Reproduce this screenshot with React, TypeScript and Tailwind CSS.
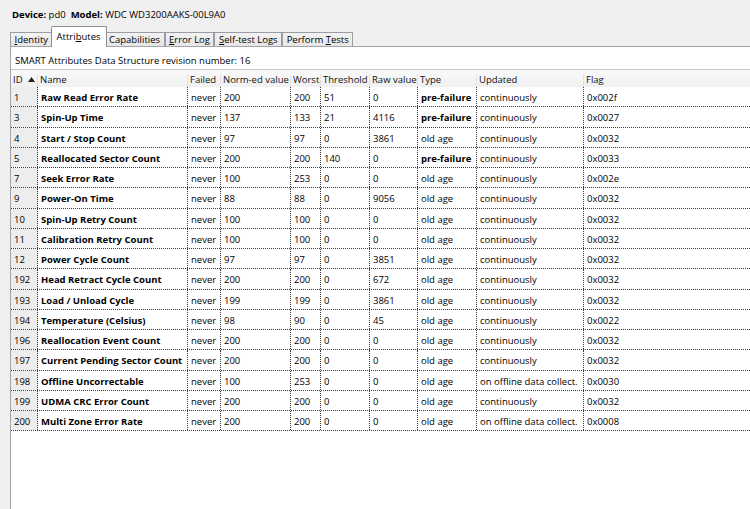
import React from "react";

type Row = {
  id: string;
  name: string;
  failed: string;
  norm: string;
  worst: string;
  thr: string;
  raw: string;
  type: string;
  updated: string;
  flag: string;
};

const rows: Row[] = [
  { id: "1", name: "Raw Read Error Rate", failed: "never", norm: "200", worst: "200", thr: "51", raw: "0", type: "pre-failure", updated: "continuously", flag: "0x002f" },
  { id: "3", name: "Spin-Up Time", failed: "never", norm: "137", worst: "133", thr: "21", raw: "4116", type: "pre-failure", updated: "continuously", flag: "0x0027" },
  { id: "4", name: "Start / Stop Count", failed: "never", norm: "97", worst: "97", thr: "0", raw: "3861", type: "old age", updated: "continuously", flag: "0x0032" },
  { id: "5", name: "Reallocated Sector Count", failed: "never", norm: "200", worst: "200", thr: "140", raw: "0", type: "pre-failure", updated: "continuously", flag: "0x0033" },
  { id: "7", name: "Seek Error Rate", failed: "never", norm: "100", worst: "253", thr: "0", raw: "0", type: "old age", updated: "continuously", flag: "0x002e" },
  { id: "9", name: "Power-On Time", failed: "never", norm: "88", worst: "88", thr: "0", raw: "9056", type: "old age", updated: "continuously", flag: "0x0032" },
  { id: "10", name: "Spin-Up Retry Count", failed: "never", norm: "100", worst: "100", thr: "0", raw: "0", type: "old age", updated: "continuously", flag: "0x0032" },
  { id: "11", name: "Calibration Retry Count", failed: "never", norm: "100", worst: "100", thr: "0", raw: "0", type: "old age", updated: "continuously", flag: "0x0032" },
  { id: "12", name: "Power Cycle Count", failed: "never", norm: "97", worst: "97", thr: "0", raw: "3851", type: "old age", updated: "continuously", flag: "0x0032" },
  { id: "192", name: "Head Retract Cycle Count", failed: "never", norm: "200", worst: "200", thr: "0", raw: "672", type: "old age", updated: "continuously", flag: "0x0032" },
  { id: "193", name: "Load / Unload Cycle", failed: "never", norm: "199", worst: "199", thr: "0", raw: "3861", type: "old age", updated: "continuously", flag: "0x0032" },
  { id: "194", name: "Temperature (Celsius)", failed: "never", norm: "98", worst: "90", thr: "0", raw: "45", type: "old age", updated: "continuously", flag: "0x0022" },
  { id: "196", name: "Reallocation Event Count", failed: "never", norm: "200", worst: "200", thr: "0", raw: "0", type: "old age", updated: "continuously", flag: "0x0032" },
  { id: "197", name: "Current Pending Sector Count", failed: "never", norm: "200", worst: "200", thr: "0", raw: "0", type: "old age", updated: "continuously", flag: "0x0032" },
  { id: "198", name: "Offline Uncorrectable", failed: "never", norm: "100", worst: "253", thr: "0", raw: "0", type: "old age", updated: "on offline data collect.", flag: "0x0030" },
  { id: "199", name: "UDMA CRC Error Count", failed: "never", norm: "200", worst: "200", thr: "0", raw: "0", type: "old age", updated: "continuously", flag: "0x0032" },
  { id: "200", name: "Multi Zone Error Rate", failed: "never", norm: "200", worst: "200", thr: "0", raw: "0", type: "old age", updated: "on offline data collect.", flag: "0x0008" },
];

const cell = "shrink-0 h-full flex items-center border-r border-dotted border-[#3a3a3a] pl-[3px] pt-[3px] whitespace-nowrap overflow-hidden";
const head = "shrink-0 flex items-center pl-[2px] border-r border-[#e2e2e2] whitespace-nowrap overflow-hidden";

function Tab({ children, selected }: { children: React.ReactNode; selected?: boolean }) {
  if (selected) {
    return (
      <div className="relative z-10 h-[21px] -mb-px -mx-[2px] px-[5px] bg-white border border-b-0 border-[#8c8e94] rounded-t-[2px] flex items-center pb-[1px]">
        {children}
      </div>
    );
  }
  return (
    <div className="h-[14px] px-[3.5px] bg-gradient-to-b from-[#f2f2f2] to-[#e6e6e6] border border-b-0 border-[#9a9da3] flex items-center pt-[1px]">
      {children}
    </div>
  );
}

export default function App() {
  return (
    <div
      className="w-[750px] h-[509px] bg-[#f0f0f0] overflow-hidden text-[9.5px] text-black flex flex-col"
      style={{ fontFamily: '"Open Sans", "Liberation Sans", sans-serif' }}
    >
      <div className="h-[26px] pl-[12px] pt-[9px] leading-[12px]">
        <span className="font-bold">Device:</span> pd0&nbsp; <span className="font-bold">Model:</span> WDC WD3200AAKS-00L9A0
      </div>
      <div className="flex items-end h-[20px] pl-[10px] leading-[12px]">
        <Tab><span><u>I</u>dentity</span></Tab>
        <Tab selected><span>Attri<u>b</u>utes</span></Tab>
        <Tab><span>Capabilities</span></Tab>
        <Tab><span><u>E</u>rror Log</span></Tab>
        <Tab><span><u>S</u>elf-test Logs</span></Tab>
        <Tab><span>Perform <u>T</u>ests</span></Tab>
      </div>
      <div className="flex-1 ml-[10px] bg-white border-l border-t border-[#a3a5aa] flex flex-col min-h-0">
        <div className="h-[22px] pl-[4px] pt-[7px] flex items-center">
          SMART Attributes Data Structure revision number: 16
        </div>
        <div className="h-px bg-[#c6c6c6]" />
        <div className="h-[17px] pt-[4px] flex bg-gradient-to-b from-[#fafafa] to-[#f0f0f0] text-[#111]">
          <div className={`${head} w-[27px]`}>
            ID
            <svg width="7" height="5" viewBox="0 0 7 5" className="ml-[5px] mb-[2px]">
              <path d="M0 5 L3.5 0 L7 5 Z" fill="#222" />
            </svg>
          </div>
          <div className={`${head} w-[150px]`}>Name</div>
          <div className={`${head} w-[33px]`}>Failed</div>
          <div className={`${head} w-[70px]`}>Norm-ed value</div>
          <div className={`${head} w-[30px]`}>Worst</div>
          <div className={`${head} w-[49px]`}>Threshold</div>
          <div className={`${head} w-[48px]`}>Raw value</div>
          <div className={`${head} w-[59px]`}>Type</div>
          <div className={`${head} w-[107px]`}>Updated</div>
          <div className="flex-1 flex items-center pl-[2px]">Flag</div>
        </div>
        <div className="flex flex-col">
          {rows.map((r) => (
            <div key={r.id} className="h-[20.25px] flex border-b border-dotted border-[#3a3a3a]">
              <div className={`${cell} w-[27px] bg-[#ededed]`}>{r.id}</div>
              <div className={`${cell} w-[150px] font-bold`}>{r.name}</div>
              <div className={`${cell} w-[33px]`}>{r.failed}</div>
              <div className={`${cell} w-[70px]`}>{r.norm}</div>
              <div className={`${cell} w-[30px]`}>{r.worst}</div>
              <div className={`${cell} w-[49px]`}>{r.thr}</div>
              <div className={`${cell} w-[48px]`}>{r.raw}</div>
              <div className={`${cell} w-[59px] ${r.type === "pre-failure" ? "font-bold" : ""}`}>{r.type}</div>
              <div className={`${cell} w-[107px]`}>{r.updated}</div>
              <div className="flex-1 h-full flex items-center pl-[3px] pt-[3px]">{r.flag}</div>
            </div>
          ))}
        </div>
      </div>
    </div>
  );
}
